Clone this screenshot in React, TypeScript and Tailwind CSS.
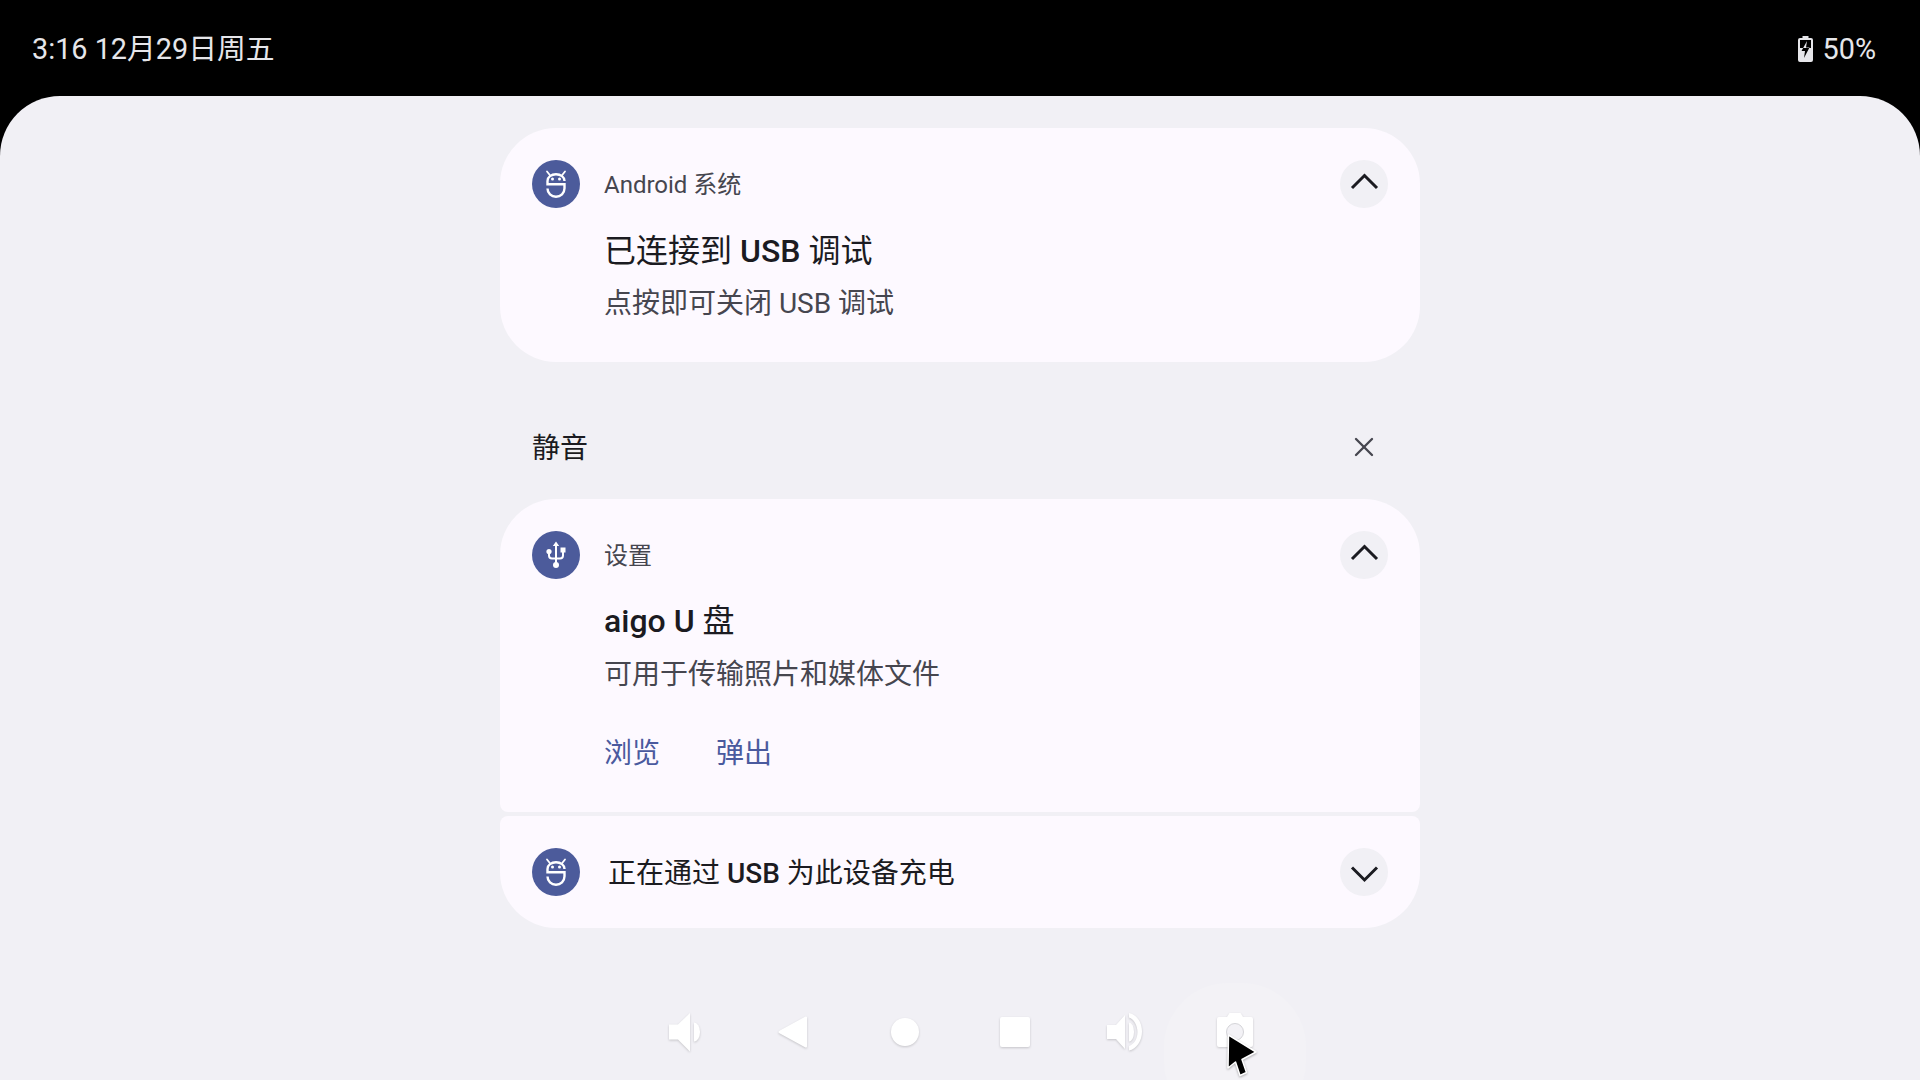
import { X } from 'lucide-react';
import type { ReactNode } from 'react';

const AdbIcon = () => (
  <svg width="48" height="48" viewBox="0 0 48 48" className="shrink-0">
    <circle cx="24" cy="24" r="24" fill="#4c5b9b" />
    <path d="M15 11.500l2.800 3.500M33 11.500l-2.800 3.500" stroke="#fff" strokeWidth="1.800" strokeLinecap="round" />
    <path
      d="M32.500 21c0-4-3.800-6.700-8.500-6.700s-8.500 2.700-8.500 6.700v3.300h17v4c0 5-3.800 8.400-8.500 8.400s-8.500-3.400-8.500-8.200"
      fill="none"
      stroke="#fff"
      strokeWidth="2.400"
    />
    <circle cx="20.500" cy="19" r="1.500" fill="#fff" />
    <circle cx="27.500" cy="19" r="1.500" fill="#fff" />
  </svg>
);

const UsbIcon = () => (
  <svg width="48" height="48" viewBox="0 0 48 48" className="shrink-0">
    <circle cx="24" cy="24" r="24" fill="#4c5b9b" />
    <path d="M24 10.500l3.200 4.600h-2.200v17h-2v-17h-2.200z" fill="#fff" />
    <circle cx="24" cy="34" r="3" fill="#fff" />
    <path d="M17 22.500v2c0 2 1 3 3 3h3M31 20v4.500c0 2-1 3-3 3h-3" fill="none" stroke="#fff" strokeWidth="2" />
    <circle cx="17" cy="20.500" r="2.600" fill="#fff" />
    <rect x="28.500" y="16.500" width="5" height="5" fill="#fff" />
  </svg>
);

// chevron drawn by hand, the one in the shade is wider than lucide's
const Chevron = ({ d }: { d: string }) => (
  <div className="w-12 h-12 rounded-full bg-[#f1f0f5] flex items-center justify-center shrink-0">
    <svg width="48" height="48" viewBox="0 0 48 48">
      <path d={d} fill="none" stroke="#1b1b21" strokeWidth="3" />
    </svg>
  </div>
);

const CardHeader = ({ name, icon }: { name: string; icon: ReactNode }) => (
  <div className="flex items-center h-12">
    {icon}
    <span className="ml-[24px] mt-[2px] text-[24px] leading-[32px] text-[#46464f]">{name}</span>
    <div className="ml-auto">
      <Chevron d="M12 28L24.500 15.500 37 28" />
    </div>
  </div>
);

const NavIcon = ({ children }: { children: ReactNode }) => (
  <div className="w-[110px] h-14 flex items-center justify-center">
    <svg width="40" height="40" viewBox="0 0 40 40" className="drop-shadow-[0_1px_1px_rgba(0,0,0,0.18)]">
      {children}
    </svg>
  </div>
);

export default function App() {
  return (
    <div className="w-[1920px] h-[1080px] bg-black flex flex-col overflow-hidden relative font-['Roboto','Noto_Sans_CJK_SC',sans-serif]">
      {/* status bar */}
      <div className="h-[96px] px-[32px] pt-[2px] flex items-center justify-between text-[28.800px] leading-[36px] text-[#e6e6ea] shrink-0">
        <span>3:16 12月29日周五</span>
        <div className="flex items-center gap-[10px] pr-[12px]">
          <svg width="15" height="26" viewBox="0 0 15 26">
            <defs>
              <clipPath id="bolt-top">
                <rect x="0" y="0" width="15" height="12" />
              </clipPath>
            </defs>
            <path d="M4.500 0h6v2h2.500a2 2 0 0 1 2 2v20a2 2 0 0 1-2 2H2a2 2 0 0 1-2-2V4a2 2 0 0 1 2-2h2.500z" fill="#e6e6ea" />
            <rect x="2" y="4" width="11" height="8" fill="#000" />
            <path d="M9 5L3.500 15H7l-1 7 5.500-10.500H8z" fill="#000" />
            <path d="M9 5L3.500 15H7l-1 7 5.500-10.500H8z" fill="#e6e6ea" clipPath="url(#bolt-top)" />
          </svg>
          <span>50%</span>
        </div>
      </div>

      {/* shade */}
      <div className="flex-1 bg-[#f1f0f5] rounded-t-[60px] flex flex-col items-center pt-[32px]">
        <div className="w-[920px] h-[234px] bg-[#fdf9ff] rounded-[56px] px-[32px] pt-[32px] shrink-0">
          <CardHeader name="Android 系统" icon={<AdbIcon />} />
          <div className="ml-[72px] mt-[21px] text-[32px] leading-[44px] text-[#1b1b21]">
            已连接到 <span className="font-medium">USB</span> 调试
          </div>
          <div className="ml-[72px] mt-[11px] text-[28px] leading-[40px] text-[#46464f]">点按即可关闭 USB 调试</div>
        </div>

        <div className="w-[920px] h-[137px] px-[32px] pt-[33px] flex items-center justify-between shrink-0">
          <span className="mt-[4px] text-[28px] leading-[40px] text-[#1b1b21]">静音</span>
          <div className="w-12 flex justify-center text-[#46464f]">
            <X size={32} strokeWidth={1.75} />
          </div>
        </div>

        <div className="w-[920px] h-[313px] bg-[#fdf9ff] rounded-t-[56px] rounded-b-[8px] px-[32px] pt-[32px] shrink-0">
          <CardHeader name="设置" icon={<UsbIcon />} />
          <div className="ml-[72px] mt-[20px] text-[32px] leading-[44px] font-medium text-[#1b1b21]">
            aigo U <span className="font-normal">盘</span>
          </div>
          <div className="ml-[72px] mt-[12px] text-[28px] leading-[40px] text-[#46464f]">可用于传输照片和媒体文件</div>
          <div className="ml-[72px] mt-[39px] flex gap-[56px] text-[28px] leading-[40px] text-[#4a5a9e]">
            <span>浏览</span>
            <span>弹出</span>
          </div>
        </div>

        <div className="w-[920px] h-[112px] mt-[4px] bg-[#fdf9ff] rounded-t-[8px] rounded-b-[56px] px-[32px] flex items-center shrink-0">
          <AdbIcon />
          <span className="ml-[28px] mt-[3px] text-[28px] leading-[40px] text-[#1b1b21]">
            正在通过 <span className="font-medium">USB</span> 为此设备充电
          </span>
          <div className="ml-auto">
            <Chevron d="M12 19.500L24.500 32 37 19.500" />
          </div>
        </div>

        {/* nav bar */}
        <div className="mt-[76px] flex relative">
          <NavIcon>
            <path d="M4 12.500h9L25 1v38.500L13 27.500H4z" fill="#fff" />
            <path d="M29 10.500a6 9.500 0 0 1 0 19z" fill="#fff" />
          </NavIcon>
          <NavIcon>
            <path d="M4.500 20L31 5.500v29z" fill="#fff" stroke="#fff" strokeWidth="2" strokeLinejoin="round" />
          </NavIcon>
          <NavIcon>
            <circle cx="20" cy="20" r="14" fill="#fff" />
          </NavIcon>
          <NavIcon>
            <rect x="5" y="5" width="30" height="30" rx="2" fill="#fff" />
          </NavIcon>
          <NavIcon>
            <path d="M2 13h9l9-10v34l-9-10H2z" fill="#fff" />
            <path d="M24 10.500a5 9.500 0 0 1 0 19z" fill="#fff" />
            <path d="M24 1c7.500 1.500 13 9 13 18.500S31.500 37 24 38.500v-4.500c5-1.500 8.500-7.500 8.500-14S29 7 24 5.500z" fill="#fff" />
          </NavIcon>
          <div className="w-[110px] h-14 flex items-center justify-center relative">
            <div className="absolute left-[-16px] top-[-21px] w-[142px] h-[142px] rounded-[64px] bg-[#f3f2f6]" />
            <svg width="40" height="40" viewBox="0 0 40 40" className="relative drop-shadow-[0_1px_1px_rgba(0,0,0,0.18)]">
              <path d="M4 5h8l2.500-4h11L28 5h8a2 2 0 0 1 2 2v26a2 2 0 0 1-2 2H4a2 2 0 0 1-2-2V7a2 2 0 0 1 2-2z" fill="#fff" />
              <circle cx="20" cy="20" r="8.500" fill="#f3f2f6" stroke="#d4d4d8" strokeWidth="1" />
            </svg>
          </div>
        </div>
      </div>

      {/* mouse cursor */}
      <svg width="32" height="44" viewBox="0 0 32 44" className="absolute left-[1226px] top-[1033px] drop-shadow-[0_1px_1px_rgba(0,0,0,0.3)]">
        <path d="M2.500 2L2 35l7.500-6 4.500 13.500 6.500-3-4.500-13L30 19z" fill="#000" stroke="#fff" strokeWidth="1.500" strokeLinejoin="round" />
      </svg>
    </div>
  );
}
